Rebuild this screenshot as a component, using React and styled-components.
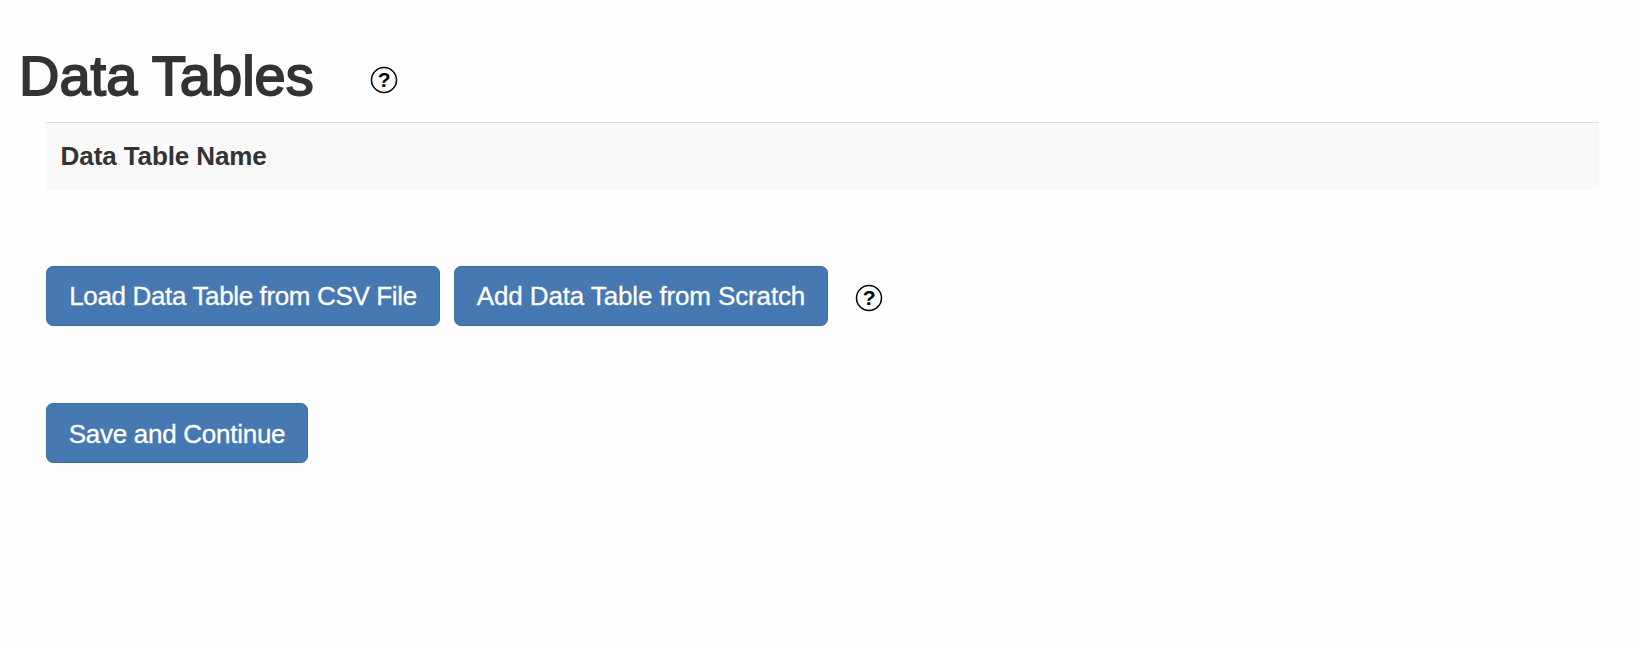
import React from 'react';
import styled, { createGlobalStyle } from 'styled-components';

const GlobalStyle = createGlobalStyle`
  *, *::before, *::after { box-sizing: border-box; }
  body {
    margin: 0;
    background: #fefefe;
    color: #333;
    font-family: "Liberation Sans", Arial, sans-serif;
    font-size: 26px;
  }
`;

const Page = styled.main`
  min-height: 648px;
  padding: 45px 41px 0 46px;
`;

const Header = styled.header`
  display: flex;
  align-items: center;
  height: 61px;
  margin: 0 0 16px -27px;
`;

const Title = styled.h1`
  width: 351.5px;
  margin: 0;
  font-size: 56px;
  line-height: 61px;
  font-weight: 400;
  -webkit-text-stroke: 1.8px currentColor;
  white-space: nowrap;
`;

const Help = styled.svg`
  flex: none;
  display: block;
  width: 28px;
  height: 28px;
  margin: ${({ $offset }) => $offset};
  font-size: 21px;
  font-weight: 700;
  color: #000;
`;

const Table = styled.table`
  width: 100%;
  border-collapse: separate;
  border-spacing: 0;
`;

const HeadCell = styled.th`
  height: 67px;
  padding: 0 14.6px;
  border-top: 1px solid #ddd;
  background: #f9f9f9;
  text-align: left;
  line-height: 36px;
  letter-spacing: -0.1px;
`;

const Actions = styled.div`
  display: flex;
  align-items: center;
  gap: 14px;
  margin-top: 77px;
`;

const Button = styled.button`
  width: ${({ $width }) => $width}px;
  height: 60px;
  padding: ${({ $drop = 0 }) => $drop}px 0 0;
  border: 1px solid #3e6da0;
  border-radius: 7px;
  background: #4678b2;
  color: #fff;
  font: inherit;
  line-height: 56px;
  letter-spacing: ${({ $tracking }) => $tracking}px;
  -webkit-text-stroke: 0.3px currentColor;
  white-space: nowrap;
`;

function HelpIcon({ offset }) {
  return (
    <Help $offset={offset} viewBox="0 0 28 28" role="img" aria-label="Help">
      <circle cx="14" cy="14" r="12.5" fill="#fff" stroke="currentColor" strokeWidth="1.5" />
      <text x="14.2" y="20.5" textAnchor="middle" fill="currentColor">?</text>
    </Help>
  );
}

export default function App() {
  return (
    <>
      <GlobalStyle />
      <Page>
        <Header>
          <Title>Data Tables</Title>
          <HelpIcon offset="8px 0 0 -1px" />
        </Header>
        <Table>
          <thead>
            <tr>
              <HeadCell>Data Table Name</HeadCell>
            </tr>
          </thead>
        </Table>
        <Actions>
          <Button $width={394} $tracking={-0.36}>Load Data Table from CSV File</Button>
          <Button $width={374} $tracking={-0.13}>Add Data Table from Scratch</Button>
          <HelpIcon offset="3px 0 0 13.2px" />
        </Actions>
        <Actions>
          <Button $width={262} $tracking={-0.27} $drop={2}>Save and Continue</Button>
        </Actions>
      </Page>
    </>
  );
}
